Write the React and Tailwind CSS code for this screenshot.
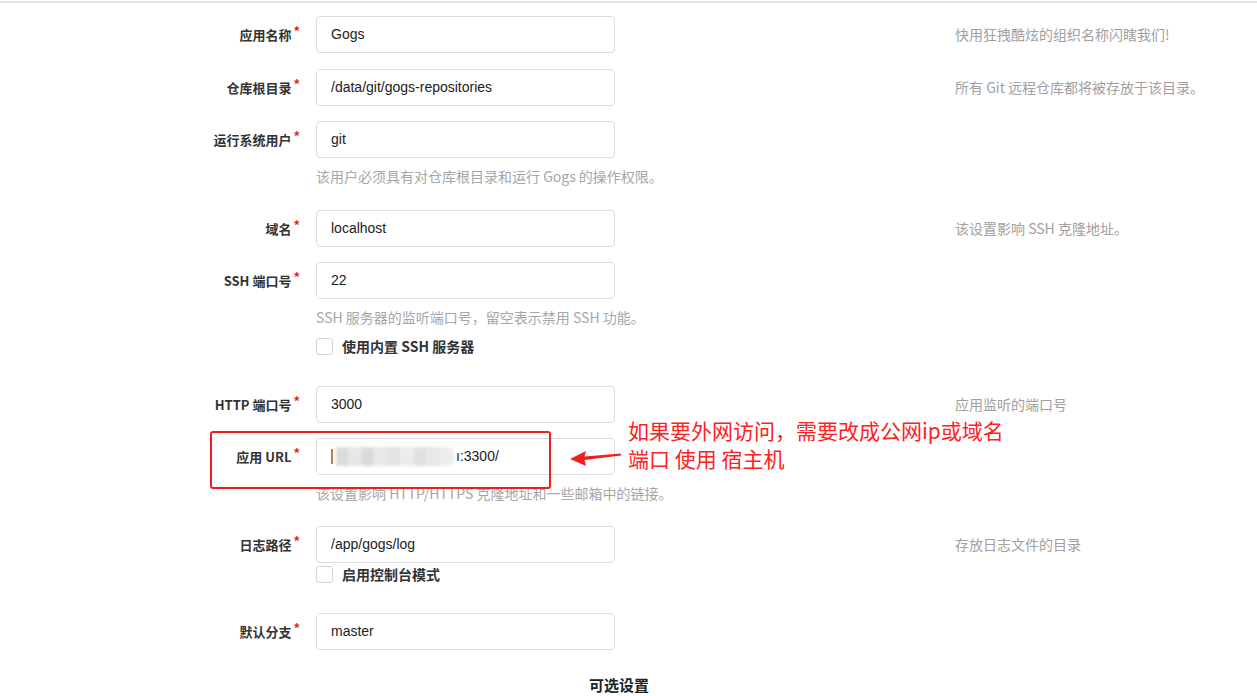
import React from "react";

const cjk = { fontFamily: '"Noto Sans CJK SC", "Liberation Sans", sans-serif' };
const latin = { fontFamily: '"Liberation Sans", "Noto Sans CJK SC", sans-serif' };

function Label({ text }) {
  return (
    <div className="w-[300px] shrink-0 flex justify-end items-center h-[37px]">
      <span className="text-[13px] font-bold text-[#333]">{text}</span>
      <span className="text-[#db2828] text-[13px] font-bold relative -top-[4px] ml-[2px]">*</span>
    </div>
  );
}

function Input({ children }) {
  return (
    <div
      className="ml-[16px] w-[299px] h-[37px] shrink-0 border border-[#dcdcdc] rounded-[4px] bg-white flex items-center pl-[14px] text-[14px] text-[#222]"
      style={latin}
    >
      {children}
    </div>
  );
}

function Field({ label, value, hint, help, check, helpPb = "pb-[9px]", className = "pb-[16px]" }) {
  return (
    <div className={className}>
      <div className="flex items-center">
        <Label text={label} />
        <Input>{value}</Input>
        {hint && <span className="ml-[340px] text-[14px] text-[#a0a0a0]">{hint}</span>}
      </div>
      {help && (
        <p className={"ml-[316px] pt-[9px] leading-[18px] text-[14px] text-[#a6a6a6] " + helpPb}>{help}</p>
      )}
      {check}
    </div>
  );
}

function Check({ text, className }) {
  return (
    <div className={"ml-[316px] flex items-center " + className}>
      <div className="w-[17px] h-[17px] border border-[#d4d4d5] rounded-[3px] bg-white" />
      <span className="ml-[9px] text-[14px] font-bold text-[#333]">{text}</span>
    </div>
  );
}

function Blurred() {
  return (
    <span className="flex items-center">
      <span className="inline-block w-[2px] h-[15px] bg-[#c8784a] mr-[3px]" />
      <span className="inline-flex h-[19px] w-[119px] overflow-hidden blur-[1.5px] rounded-r-[8px]">
        <span className="w-[12px] bg-[#dedcda]" />
        <span className="w-[14px] bg-[#e6e7ea]" />
        <span className="w-[12px] bg-[#dcdad8]" />
        <span className="w-[14px] bg-[#e9e9ea]" />
        <span className="w-[12px] bg-[#e4e3e2]" />
        <span className="w-[14px] bg-[#ebecee]" />
        <span className="w-[12px] bg-[#e1e1e1]" />
        <span className="w-[14px] bg-[#e7e7e8]" />
        <span className="w-[15px] bg-[#eeeeee]" />
      </span>
      <span className="ml-[1px]">ı:3300/</span>
    </span>
  );
}

export default function App() {
  return (
    <div className="relative w-[1257px] h-[696px] bg-white overflow-hidden" style={cjk}>
      <div className="mt-[1px] h-[2px] bg-[#e2e2e2]" />

      <div className="pt-[13px]">
        <Field label="应用名称" value="Gogs" hint="快用狂拽酷炫的组织名称闪瞎我们!" />
        <Field label="仓库根目录" value="/data/git/gogs-repositories" hint="所有 Git 远程仓库都将被存放于该目录。" className="pb-[15px]" />
        <Field label="运行系统用户" value="git" help="该用户必须具有对仓库根目录和运行 Gogs 的操作权限。" />
        <Field label="域名" value="localhost" hint="该设置影响 SSH 克隆地址。" className="pb-[15px]" />
        <Field
          label="SSH 端口号"
          value="22"
          help="SSH 服务器的监听端口号，留空表示禁用 SSH 功能。"
          helpPb="pb-0"
          className="pb-[31px]"
          check={<Check text="使用内置 SSH 服务器" className="mt-[11px] h-[18px]" />}
        />
        <Field label="HTTP 端口号" value="3000" hint="应用监听的端口号" className="pb-[15px]" />
        <Field label="应用 URL" value={<Blurred />} help="该设置影响 HTTP/HTTPS 克隆地址和一些邮箱中的链接。" helpPb="pb-[8px]" />
        <Field
          label="日志路径"
          value="/app/gogs/log"
          hint="存放日志文件的目录"
          className="pb-[30px]"
          check={<Check text="启用控制台模式" className="mt-[3px] h-[17px]" />}
        />
        <Field label="默认分支" value="master" className="pb-0" />
        <div className="pl-[589px] mt-[25px] text-[15px] font-bold text-[#222] leading-[20px]">可选设置</div>
      </div>

      {/* annotation overlay */}
      <div className="absolute left-[210px] top-[431px] w-[341px] h-[58px] border-[2px] border-[#f01f1f] rounded-[3px]" />
      <svg className="absolute left-[566px] top-[445px]" width="58" height="24" viewBox="0 0 58 24">
        <path d="M4 14 L20 6 L18.5 11.5 L55 8.5 L55 10.5 L18.5 15 L20 21 Z" fill="#f01f1f" />
      </svg>
      <div className="absolute left-[628px] top-[416px] text-[21px] leading-[28px] text-[#ff2121]">
        <div>如果要外网访问，需要改成公网ip或域名</div>
        <div>端口 使用 宿主机</div>
      </div>
    </div>
  );
}
